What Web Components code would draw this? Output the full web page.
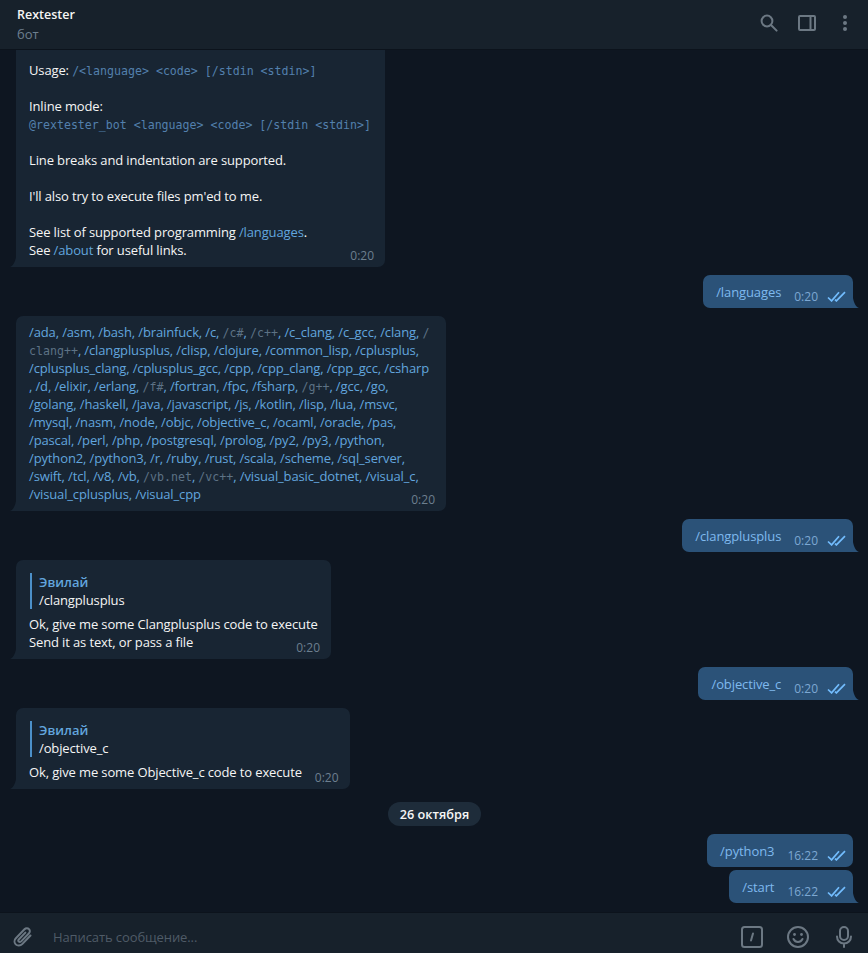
<!DOCTYPE html>
<html>
<head>
<meta charset="utf-8">
<title>Rextester</title>
<style>
  html, body { margin: 0; height: 100%; background: #0e1621; }
  body { font-family: "Open Sans", "Noto Sans", sans-serif; font-size: 13px; overflow: hidden; }
</style>
</head>
<body>
<tg-app>
  <tg-header slot="header" name="Rextester" status="бот"></tg-header>

  <tg-bubble time="0:20">
    <br><br>
    Usage: <tg-code>/&lt;language&gt; &lt;code&gt; [/stdin &lt;stdin&gt;]</tg-code><br><br>
    Inline mode:<br>
    <tg-code>@rextester_bot &lt;language&gt; &lt;code&gt; [/stdin &lt;stdin&gt;]</tg-code><br><br>
    Line breaks and indentation are supported.<br><br>
    I'll also try to execute files pm'ed to me.<br><br>
    See list of supported programming <tg-link>/languages</tg-link>.<br>
    See <tg-link>/about</tg-link> for useful links.
  </tg-bubble>

  <tg-bubble out time="0:20"><tg-link>/languages</tg-link></tg-bubble>

  <tg-bubble time="0:20" style="width:403px">
    <tg-link>/ada, /asm, /bash, /brainfuck, /c, <tg-code muted>/c#</tg-code>, <tg-code muted>/c++</tg-code>, /c_clang, /c_gcc, /clang, <tg-code muted>/</tg-code><br>
    <tg-code muted>clang++</tg-code>, /clangplusplus, /clisp, /clojure, /common_lisp, /cplusplus,<br>
    /cplusplus_clang, /cplusplus_gcc, /cpp, /cpp_clang, /cpp_gcc, /csharp<br>
    , /d, /elixir, /erlang, <tg-code muted>/f#</tg-code>, /fortran, /fpc, /fsharp, <tg-code muted>/g++</tg-code>, /gcc, /go,<br>
    /golang, /haskell, /java, /javascript, /js, /kotlin, /lisp, /lua, /msvc,<br>
    /mysql, /nasm, /node, /objc, /objective_c, /ocaml, /oracle, /pas,<br>
    /pascal, /perl, /php, /postgresql, /prolog, /py2, /py3, /python,<br>
    /python2, /python3, /r, /ruby, /rust, /scala, /scheme, /sql_server,<br>
    /swift, /tcl, /v8, /vb, <tg-code muted>/vb.net</tg-code>, <tg-code muted>/vc++</tg-code>, /visual_basic_dotnet, /visual_c,<br>
    /visual_cplusplus, /visual_cpp</tg-link>
  </tg-bubble>

  <tg-bubble out time="0:20"><tg-link>/clangplusplus</tg-link></tg-bubble>

  <tg-bubble time="0:20" style="width:288px">
    <tg-reply slot="reply" name="Эвилай" text="/clangplusplus"></tg-reply>
    Ok, give me some Clangplusplus code to execute<br>
    Send it as text, or pass a file
  </tg-bubble>

  <tg-bubble out time="0:20"><tg-link>/objective_c</tg-link></tg-bubble>

  <tg-bubble inline time="0:20">
    <tg-reply slot="reply" name="Эвилай" text="/objective_c"></tg-reply>
    Ok, give me some Objective_c code to execute
  </tg-bubble>

  <tg-date>26 октября</tg-date>

  <tg-bubble out notail time="16:22" style="margin-top:0"><tg-link>/python3</tg-link></tg-bubble>
  <tg-bubble out time="16:22" style="margin-top:3px"><tg-link>/start</tg-link></tg-bubble>

  <tg-composer slot="composer" placeholder="Написать сообщение..."></tg-composer>
</tg-app>

<script>
class TgApp extends HTMLElement {
  constructor() {
    super();
    this.attachShadow({ mode: 'open' }).innerHTML = `
      <style>
        :host { display: flex; flex-direction: column; width: 100%; height: 100vh; background: #0e1621; overflow: hidden; }
        .history {
          flex: 1; min-height: 0; overflow: hidden;
          display: flex; flex-direction: column; justify-content: flex-end;
          padding: 0 15px 9px 16px;
        }
        ::slotted(tg-header), ::slotted(tg-composer) { flex: none; }
      </style>
      <slot name="header"></slot>
      <div class="history"><slot></slot></div>
      <slot name="composer"></slot>
    `;
  }
}

class TgHeader extends HTMLElement {
  constructor() {
    super();
    this.attachShadow({ mode: 'open' }).innerHTML = `
      <style>
        :host { display: flex; align-items: center; height: 50px; box-sizing: border-box; background: #17212b; padding: 0 21px 0 17px; position: relative; z-index: 2; border-bottom: 1px solid #0c131c; }
        .info { flex: 1; }
        .name { color: #f5f5f5; font-weight: 600; font-size: 12.5px; line-height: 18px; }
        .status { color: #6d7f8f; font-size: 13px; line-height: 18px; margin-top: 1px; }
        .icons { display: flex; align-items: center; gap: 20px; margin-top: -3px; }
        svg { display: block; fill: none; stroke: #6c7883; stroke-width: 2; }
      </style>
      <div class="info">
        <div class="name">${this.getAttribute('name')}</div>
        <div class="status">${this.getAttribute('status')}</div>
      </div>
      <div class="icons">
        <svg width="18" height="18" viewBox="0 0 18 18"><circle cx="7" cy="7" r="5.4"/><path d="M11 11l5.6 5.6" stroke-linecap="round"/></svg>
        <svg width="18" height="16" viewBox="0 0 18 16"><rect x="1" y="1" width="16" height="14" rx="1"/><path d="M12.500 1v14"/></svg>
        <svg style="margin-left:7px" width="4" height="16" viewBox="0 0 4 16"><g fill="#6c7883" stroke="none"><circle cx="2" cy="2" r="2"/><circle cx="2" cy="8" r="2"/><circle cx="2" cy="14" r="2"/></g></svg>
      </div>
    `;
  }
}

class TgCode extends HTMLElement {
  constructor() {
    super();
    this.attachShadow({ mode: 'open' }).innerHTML = `
      <style>
        :host { display: inline; font-family: "DejaVu Sans Mono", monospace; font-size: 11.6px; line-height: 1; letter-spacing: 0; color: #5380ad; }
        :host([muted]) { color: #5d7285; }
      </style><slot></slot>`;
  }
}

class TgLink extends HTMLElement {
  constructor() {
    super();
    this.attachShadow({ mode: 'open' }).innerHTML = `
      <style>:host { display: inline; color: var(--link, #62a5de); }</style><slot></slot>`;
  }
}

class TgReply extends HTMLElement {
  constructor() {
    super();
    this.attachShadow({ mode: 'open' }).innerHTML = `
      <style>
        :host { display: block; border-left: 2px solid #4c90c9; padding-left: 7px; margin: 6px 0 6px 1px; line-height: 18px; }
        .name { color: #62a5de; font-weight: 600; letter-spacing: 0; }
        .text { color: #f5f5f5; }
      </style>
      <div class="name">${this.getAttribute('name')}</div>
      <div class="text">${this.getAttribute('text')}</div>
    `;
  }
}

class TgBubble extends HTMLElement {
  constructor() {
    super();
    const out = this.hasAttribute('out');
    const ticks = out ? `<svg class="ticks" width="19" height="11" viewBox="0 0 19 11"><path d="M1 6.500l3.600 3.400L12 1.200M8 8.600l1.400 1.300L18 1.200" fill="none" stroke="#72bcfd" stroke-width="1.700"/></svg>` : '';
    const tail = this.hasAttribute('notail') ? '' : (out
      ? `<svg class="tail" width="6" height="10" viewBox="0 0 6 10"><path d="M0 0v10h6C3 9 .800 5 0 0z" fill="#2b5278"/></svg>`
      : `<svg class="tail" width="6" height="10" viewBox="0 0 6 10"><path d="M6 0v10H0C3 9 5.200 5 6 0z" fill="#182533"/></svg>`);
    this.attachShadow({ mode: 'open' }).innerHTML = `
      <style>
        :host { display: block; flex: none; align-self: flex-start; position: relative; box-sizing: content-box; background: #182533; color: #f5f5f5; border-radius: 7px 7px 7px 0; margin-top: 8px; padding: 7px 14px 8px 13px; line-height: 18px; letter-spacing: -0.13px; white-space: nowrap; }
        :host([out]) { align-self: flex-end; background: #2b5278; border-radius: 7px 7px 0 7px; padding: 8px 7px 7px 13px; letter-spacing: -0.1px; --link: #7fb9ee; }
        :host([notail]) { border-radius: 7px; }
        .tail { position: absolute; bottom: 0; left: -6px; }
        :host([out]) .tail { left: auto; right: -6px; }
        .row { display: flex; align-items: flex-end; }
        .meta { display: flex; align-items: center; justify-content: flex-end; gap: 9px; font-size: 12px; line-height: 16px; letter-spacing: 0; color: #6d7f8f; margin: -11px -3px -5px 0; }
        :host([out]) .meta { color: #7da8d3; margin: 0 0 -4px 13px; }
        :host([inline]) .meta { margin: 0 -3px -5px 13px; }
        .ticks { display: block; margin-bottom: 2px; }
      </style>
      <slot name="reply"></slot>
      ${out || this.hasAttribute('inline')
        ? `<div class="row"><div><slot></slot></div><div class="meta"><span>${this.getAttribute('time')}</span>${ticks}</div></div>`
        : `<div><slot></slot></div><div class="meta"><span>${this.getAttribute('time')}</span></div>`}
      ${tail}
    `;
  }
}

class TgDate extends HTMLElement {
  constructor() {
    super();
    this.attachShadow({ mode: 'open' }).innerHTML = `
      <style>
        :host { display: block; flex: none; align-self: center; margin: 13px 0 8px; background: #1e2c3a; color: #f5f5f5; font-weight: 600; font-size: 12.7px; line-height: 24px; padding: 0 12px; border-radius: 12px; }
      </style><slot></slot>`;
  }
}

class TgComposer extends HTMLElement {
  constructor() {
    super();
    this.attachShadow({ mode: 'open' }).innerHTML = `
      <style>
        :host { display: flex; align-items: center; height: 41px; box-sizing: border-box; background: #17212b; padding: 7px 16px 0 13px; border-top: 1px solid #0c131c; }
        svg { display: block; fill: none; stroke: #6c7883; stroke-width: 2; }
        .input { flex: 1; color: #4f5b67; font-size: 13px; letter-spacing: -0.1px; margin-left: 20px; }
        .icons { display: flex; align-items: center; }
        .icons svg + svg { margin-left: 24px; }
        .icons svg:last-child { margin-left: 27px; }
      </style>
      <svg width="20" height="22" viewBox="0 0 20 22"><path d="M17.500 9.500l-8.300 8.600c-1.900 1.900-4.800 2-6.500.3-1.700-1.700-1.500-4.500.4-6.400l8.400-8.700c1.300-1.300 3.300-1.400 4.500-.2 1.200 1.200 1.100 3.100-.2 4.400l-7.600 7.900c-.7.700-1.800.8-2.400.2-.6-.6-.5-1.700.2-2.400l6.400-6.600" stroke-linecap="round"/></svg>
      <div class="input">${this.getAttribute('placeholder')}</div>
      <div class="icons">
        <svg width="22" height="22" viewBox="0 0 22 22"><rect x="1" y="1" width="20" height="20" rx="2.500"/><path d="M12 7.500l-2 7" stroke-linecap="round"/></svg>
        <svg width="22" height="22" viewBox="0 0 22 22"><circle cx="11" cy="11" r="10"/><path d="M6.500 13c1 2 2.600 3 4.500 3s3.500-1 4.500-3" stroke-linecap="round"/><circle cx="7.500" cy="8.500" r="1.400" fill="#6c7883" stroke="none"/><circle cx="14.500" cy="8.500" r="1.400" fill="#6c7883" stroke="none"/></svg>
        <svg width="16" height="22" viewBox="0 0 16 22"><rect x="4" y="1" width="8" height="13" rx="4"/><path d="M1 10.500c0 4 3 7 7 7s7-3 7-7M8 17.500V21" stroke-linecap="round"/></svg>
      </div>
    `;
  }
}

customElements.define('tg-app', TgApp);
customElements.define('tg-header', TgHeader);
customElements.define('tg-code', TgCode);
customElements.define('tg-link', TgLink);
customElements.define('tg-reply', TgReply);
customElements.define('tg-bubble', TgBubble);
customElements.define('tg-date', TgDate);
customElements.define('tg-composer', TgComposer);
</script>
</body>
</html>
